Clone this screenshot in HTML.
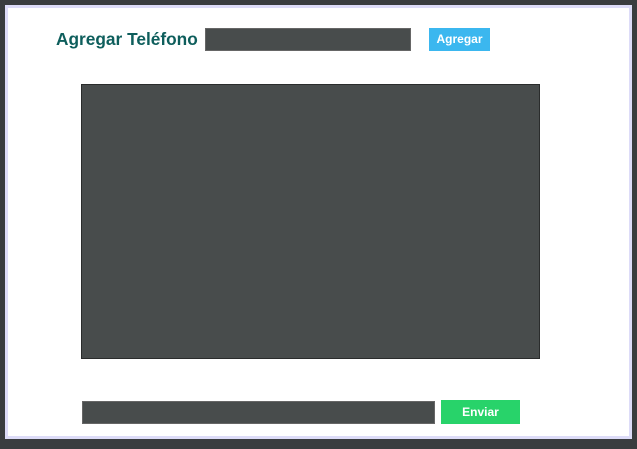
<!DOCTYPE html>
<html><head><style>
body{margin:0;width:637px;height:449px;background:#3a3d3f;position:relative;overflow:hidden;font-family:"Liberation Sans",sans-serif}
.lav{position:absolute;left:5px;top:5px;width:627px;height:434px;background:#dddcf8}
.w{position:absolute;left:8px;top:8px;width:621px;height:428px;background:#fff}
.a{position:absolute;box-sizing:border-box}
</style></head><body>
<div class="lav"></div><div class="w"></div>
<div class="a" style="left:56px;top:28px;font-size:17.3px;font-weight:bold;color:#0e5e5c;line-height:22px">Agregar Teléfono</div>
<div class="a" style="left:205px;top:28px;width:206px;height:23px;background:#484c4c;border:1px solid #666"></div>
<div class="a" style="left:429px;top:28px;width:61px;height:23px;background:#3bb7ef;color:#fff;font-size:12px;font-weight:bold;text-align:center;line-height:23px">Agregar</div>
<div class="a" style="left:81px;top:84px;width:459px;height:275px;background:#484c4c;border:1px solid #2a2c2c"></div>
<div class="a" style="left:82px;top:401px;width:353px;height:23px;background:#484c4c;border:1px solid #666"></div>
<div class="a" style="left:441px;top:400px;width:79px;height:24px;background:#28d36a;color:#fff;font-size:12px;font-weight:bold;text-align:center;line-height:24px">Enviar</div>
</body></html>
